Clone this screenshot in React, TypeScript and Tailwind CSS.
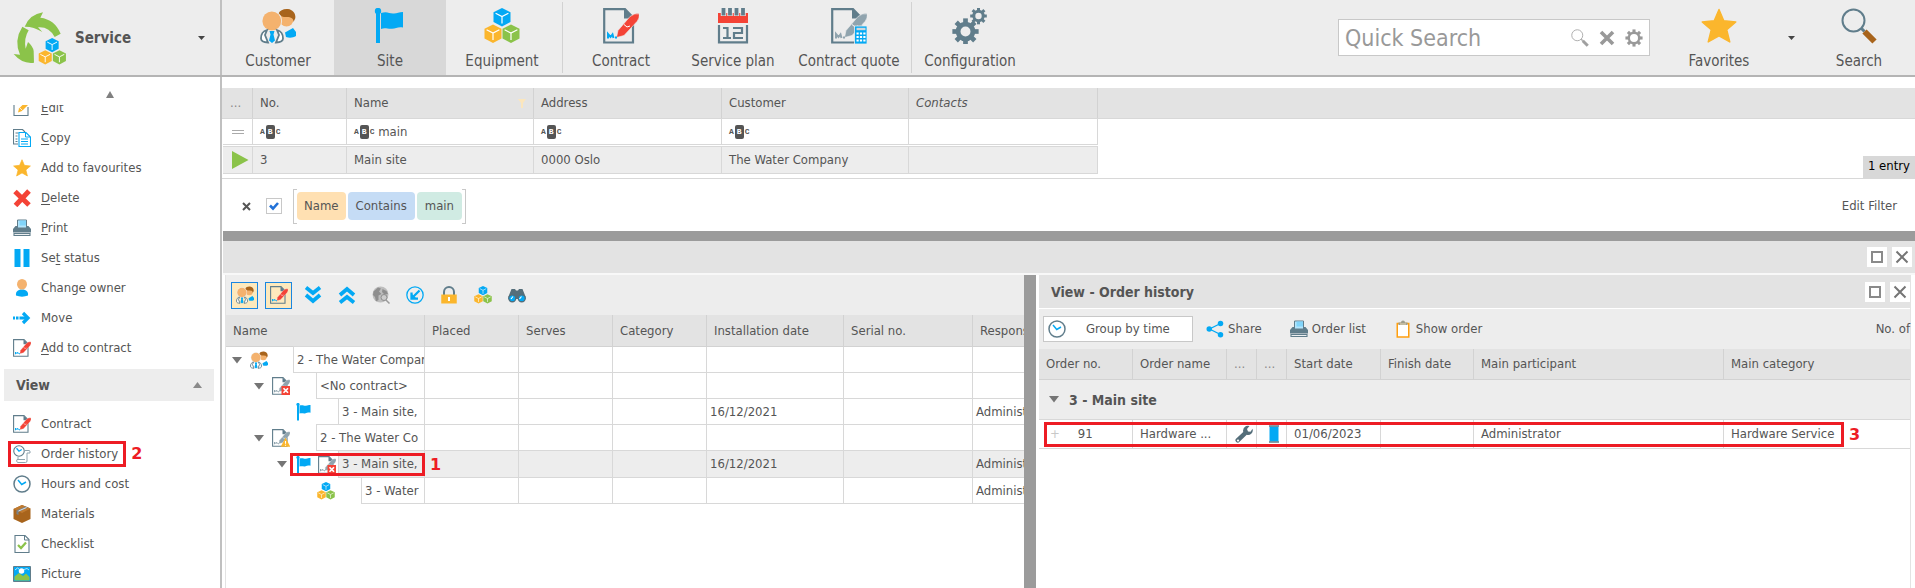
import type { ReactNode } from "react";

type IconProps = { size?: number };

const BLUE = "#03a9f4";
const SLATE = "#607d8b";
const GREEN = "#8bc34a";
const AMBER = "#fbb62d";
const RED = "#f44336";
const BROWN = "#a8641c";
const SKIN = "#f4b26e";

function Svg({ size = 18, box = 36, children }: { size?: number; box?: number; children: ReactNode }) {
  return (
    <svg width={size} height={size} viewBox={`0 0 ${box} ${box}`} fill="none" aria-hidden="true" className="block shrink-0">
      {children}
    </svg>
  );
}

function Cube({ x, y, color }: { x: number; y: number; color: string }) {
  return (
    <g transform={`translate(${x} ${y})`}>
      <path d="M9 0 17.5 4.2V14L9 18.6.5 14V4.2Z" fill={color} />
      <path d="M2.6 5.3 9 8.6l6.4-3.3M9 8.6v7" fill="none" stroke="#fff" strokeWidth="1.2" />
    </g>
  );
}

function LogoIcon() {
  return (
    <svg width="54" height="54" viewBox="0 0 162 162" aria-hidden="true" className="block shrink-0">
      <path d="M35 47Q50 10 90 4L82 20Q125 25 143 68L125 78Q108 46 75 49L88 63Q60 46 35 47Z" fill={GREEN} />
      <path d="M28 47 47 58Q32 82 38 113L45 93Q60 106 62 120L63 155Q28 160 2 129L21 131Q2 88 28 47Z" fill={GREEN} />
      <g transform="translate(76 81) scale(2.3)">
        <Cube x={9} y={0} color={BLUE} />
        <Cube x={0} y={16} color={AMBER} />
        <Cube x={18.5} y={16} color={GREEN} />
      </g>
    </svg>
  );
}

const CubesIcon = ({ size }: IconProps) => (
  <Svg size={size}>
    <Cube x={9} y={0} color={BLUE} />
    <Cube x={0} y={16.5} color={AMBER} />
    <Cube x={18} y={16.5} color={GREEN} />
  </Svg>
);

const CustomerIcon = ({ size }: IconProps) => (
  <Svg size={size}>
    <circle cx="26.500" cy="11.500" r="7" fill={SKIN} />
    <path d="M18.500 5.500C20 2 24 .5 28 1c5 .6 8.200 5 7.200 9.500L33.500 14C33.500 9 29 9 26 9c-3 0-5-.5-7.500-3.500Z" fill={BROWN} />
    <path d="M25 24.500 33 20l3 4v4c-3 2-7 2-10 1Z" fill={BLUE} />
    <circle cx="11.800" cy="13" r="10.300" fill="#eee" />
    <circle cx="11.800" cy="13" r="9.400" fill={SKIN} />
    <path d="M7 22C3 23 1 26 1 30.500c0 3 3 3.800 7 4L5 27ZM17 22c4 1 6 4 6 8.500 0 3-3 3.800-7 4L19 27Z" fill="#fff" stroke={SLATE} strokeWidth="1.800" />
    <path d="M9.500 23h5l-1 3.500 1.500 6-3 2.500-3-2.500 1.500-6Z" fill={BLUE} />
  </Svg>
);

const FlagIcon = ({ size }: IconProps) => (
  <Svg size={size}>
    <circle cx="6" cy="3" r="3.200" fill={BLUE} />
    <path d="M4 3h4v32H4ZM9 5c7-2 8 1 13 .5 3-.3 5-1.500 9-1.500v15.500c-5-1-7 1-11 1.300C15 21 13 19.500 9 21Z" fill={BLUE} />
  </Svg>
);

const Page = () => (
  <>
    <path d="M1.200 1.200H22L30 9.500V34.500H1.200Z" stroke={SLATE} strokeWidth="2.200" />
    <path d="M21 1v9.500h9.500Z" fill={SLATE} />
  </>
);

const Pen = ({ color }: { color: string }) => (
  <>
    <path d="M13.500 29.500 15 22.500 27 8.500Q32 4.500 36.500 6 36.500 10.500 34 13.500L21 27.500Z" fill={color} stroke="#eee" strokeWidth=".6" />
    <path d="m21 16.500 3 2.500 3-1" stroke="#fff" strokeWidth="1" />
  </>
);

const SIGNATURE = "M5 30.500V26L7.500 29 9.500 26.500 10.500 30M12 29.500h2";

const ContractIcon = ({ size }: IconProps) => (
  <Svg size={size}>
    <Page />
    <Pen color={RED} />
    <path d={SIGNATURE} stroke={BLUE} strokeWidth="2" />
  </Svg>
);

const GreyContract = () => (
  <>
    <Page />
    <Pen color="#90a4ae" />
    <path d={SIGNATURE} stroke="#90a4ae" strokeWidth="2" />
  </>
);

const QuoteIcon = ({ size }: IconProps) => (
  <Svg size={size}>
    <GreyContract />
    <rect x="23.500" y="18" width="12.500" height="18" fill={BLUE} stroke="#eee" strokeWidth=".8" />
    <path d="M25.500 21h9" stroke="#cfd8dc" strokeWidth="2.400" />
    <path d="M25.500 25.500h9M25.500 29h9M25.500 32.500h9" stroke="#fff" strokeWidth="2" strokeDasharray="2.200 1.200" />
  </Svg>
);

const ContractErrorIcon = ({ size }: IconProps) => (
  <Svg size={size}>
    <GreyContract />
    <rect x="19" y="18" width="17" height="18" fill={RED} />
    <path d="m23 22.500 9 9m0-9-9 9" stroke="#fff" strokeWidth="3.400" />
  </Svg>
);

const ContractWarnIcon = ({ size }: IconProps) => (
  <Svg size={size}>
    <GreyContract />
    <path d="m27 17 9.500 18.500h-19Z" fill={AMBER} />
    <path d="M27 24v5.500m0 2v2" stroke="#fff" strokeWidth="2.200" />
  </Svg>
);

const CalendarIcon = ({ size }: IconProps) => (
  <Svg size={size}>
    <path d="M3 5h30v10H3Z" fill={RED} />
    <path d="M8.500 0v8M15 0v8M21.500 0v8M28 0v8" stroke="#eee" strokeWidth="5.400" />
    <path d="M8.500 0v7.500M15 0v7.500M21.500 0v7.500M28 0v7.500" stroke={SLATE} strokeWidth="3.800" />
    <path d="M4 17v17.300h28V17" stroke={SLATE} strokeWidth="2.200" />
    <path d="M8 20h4.500v9.500M8 30h8M18 20h9v5h-8v5h9" stroke={SLATE} strokeWidth="2.200" />
  </Svg>
);

const gearTeeth = [0, 45, 90, 135, 180, 225, 270, 315];

function Gear({ x, y, r, color, hole }: { x: number; y: number; r: number; color: string; hole: number }) {
  return (
    <g transform={`translate(${x} ${y})`}>
      {gearTeeth.map((a) => (
        <rect key={a} x={-r * 0.24} y={-r * 1.34} width={r * 0.48} height={r * 0.6} fill={color} transform={`rotate(${a})`} />
      ))}
      <circle r={(r + hole) / 2} stroke={color} strokeWidth={r - hole} />
    </g>
  );
}

const GearsIcon = ({ size }: IconProps) => (
  <Svg size={size}>
    <Gear x={13.500} y={23.500} r={9.800} hole={5} color={SLATE} />
    <Gear x={26.500} y={8} r={6.200} hole={3.200} color={SLATE} />
  </Svg>
);

const StarIcon = ({ size }: IconProps) => (
  <Svg size={size}>
    <path d="m18 1.500 4.800 11.200 12 1.300-9 7.800 3 12.200L18 27.800 7.200 34l3-12.200-9-7.800 12-1.300Z" fill={AMBER} stroke={AMBER} strokeWidth="1.400" strokeLinejoin="round" />
  </Svg>
);

const MagnifierIcon = ({ size, ring = SLATE, handle = BROWN }: IconProps & { ring?: string; handle?: string }) => (
  <Svg size={size}>
    <circle cx="12.500" cy="12.500" r="11" stroke={ring} strokeWidth="2" />
    <path d="m20 20 3.500 3.500" stroke={ring} strokeWidth="3" />
    <path d="m23.500 23.500 10 10" stroke={handle} strokeWidth="6" />
  </Svg>
);

const EditIcon = () => (
  <Svg>
    <path d="M20 3H2v30h28V16" stroke={SLATE} strokeWidth="2.200" />
    <path d="m10 27 2-8L26 5l6 5-14 14Z" fill={AMBER} />
    <path d="m14 18 5 5" stroke="#fff" strokeWidth="1.500" />
  </Svg>
);

const CopyIcon = () => (
  <Svg>
    <path d="M10 30H1V1h18l5 5" stroke={SLATE} strokeWidth="2.200" />
    <path d="M5 8h6M5 14h4M5 20h4M5 25h4" stroke={SLATE} strokeWidth="2" />
    <path d="M12 7h14l9 9v19H12Z" fill="#fff" stroke={BLUE} strokeWidth="2.200" />
    <path d="M25 7v9h9M16 20h14M16 25h14M16 30h14" stroke={BLUE} strokeWidth="2" />
  </Svg>
);

const DeleteIcon = () => (
  <Svg>
    <path d="m4 5 28 27M32 4 5 33" stroke={RED} strokeWidth="10" />
  </Svg>
);

const PrinterIcon = () => (
  <Svg>
    <path d="M9 2h18v16H9Z" fill="#b3e5fc" stroke={SLATE} strokeWidth="2" />
    <path d="M13 3h13v10H13Z" fill="#81d4fa" />
    <path d="M5 14h4v4h18v-4h4l5 6v7H0v-7Z" fill={SLATE} />
    <path d="M2 29h32v4H2Z" fill="#eceff1" stroke={SLATE} strokeWidth="2.200" />
  </Svg>
);

const PauseIcon = () => (
  <Svg>
    <path d="M3 0h12v36H3ZM21 0h12v36H21Z" fill={BLUE} />
  </Svg>
);

const UserIcon = () => (
  <Svg>
    <path d="M6 33c-1-7 3-12 12-12s13 5 12 12c-7 3-17 3-24 0Z" fill={BLUE} />
    <ellipse cx="18" cy="10.500" rx="10" ry="10.500" fill={SKIN} />
  </Svg>
);

const MoveIcon = () => (
  <Svg>
    <path d="M0 15h4v6H0ZM6 15h5v6H6ZM13 15h14v6H13Z" fill={BLUE} />
    <path d="m20 8 10 10-10 10" stroke={BLUE} strokeWidth="6.500" />
  </Svg>
);

const ClockIcon = () => (
  <Svg>
    <circle cx="18" cy="18" r="16" fill="#fff" stroke={SLATE} strokeWidth="3" />
    <path d="m10 10 7.500 9L26 14" stroke={BLUE} strokeWidth="3" />
  </Svg>
);

const OrderHistoryIcon = () => (
  <Svg>
    <circle cx="12" cy="12" r="10.500" fill="#fff" stroke={SLATE} strokeWidth="2.200" />
    <path d="m7 6.500 5 6 5.500-3.500" stroke={BLUE} strokeWidth="2.600" />
    <path d="M24 11h8q3 0 2 5h-6v16q0 3-3 3H9q-3-3-1-6h16M10 24v5" stroke="#90a4ae" strokeWidth="2" />
  </Svg>
);

const BoxIcon = () => (
  <Svg>
    <path d="m18 0 17 7v21l-17 8L1 28V8Z" fill={BROWN} />
    <path d="m1 8 17 8 17-9L18 0Z" fill="#bf7a30" />
    <path d="m7 11 18-8 5 2-19 9v6l-4-2Z" fill="#78828a" />
    <path d="m11 12 16-7" stroke="#fff" strokeWidth="1.500" />
  </Svg>
);

const ChecklistIcon = () => (
  <Svg>
    <path d="M4 1h20l8 8v26H4Z" fill="#fff" stroke={SLATE} strokeWidth="2.200" />
    <path d="M23 1v9h9" stroke={SLATE} strokeWidth="2" />
    <path d="m10 20 6 6 10-11" stroke={GREEN} strokeWidth="4.500" />
  </Svg>
);

const PictureIcon = () => (
  <Svg>
    <path d="M1 3h34v30H1Z" fill={BLUE} stroke={SLATE} strokeWidth="2" />
    <path d="M3 23 12 16l8 6 6-5 7 7v7H3Z" fill={GREEN} />
    <circle cx="17" cy="12" r="5.500" fill="#fff" />
    <path d="m4 10 5-4 4 3M22 9l6-2 4 3" stroke="#b3e5fc" strokeWidth="2" />
  </Svg>
);

const ChevronsIcon = ({ up = false }: { up?: boolean }) => (
  <Svg>
    <g transform={up ? "rotate(180 18 18)" : undefined}>
      <path d="m4 3 14 11L32 3M4 18l14 12 14-12" stroke={BLUE} strokeWidth="7.500" />
    </g>
  </Svg>
);

const GlobeIcon = () => (
  <Svg>
    <circle cx="17" cy="17" r="16" fill="#bdbdbd" />
    <path d="M3 11 12 3l6 2-4 6 5 5-6 3v9L8 31l-2-9-4-4ZM21 6l8 4 3 6-7 1-5-5Z" fill="#8e8e8e" />
    <circle cx="24" cy="23" r="6" fill="#ccc" stroke="#8e8e8e" strokeWidth="2" />
    <path d="m28 28 7 7" stroke="#9a9a9a" strokeWidth="3" />
  </Svg>
);

const OpenIcon = () => (
  <Svg>
    <circle cx="18" cy="18" r="16.300" stroke={BLUE} strokeWidth="2.600" />
    <path d="M27 9 13 23M11 13v12h13" stroke={BLUE} strokeWidth="4.500" />
    <path d="M11 15v10h10Z" fill={BLUE} />
  </Svg>
);

const LockIcon = () => (
  <Svg>
    <path d="M8 19V12a10 10 0 0 1 20 0v7" stroke={SLATE} strokeWidth="4" />
    <path d="M2.500 17h31v18h-31Z" fill={AMBER} />
    <path d="M18 22v8" stroke="#fff" strokeWidth="4" />
  </Svg>
);

const BinocularsIcon = () => (
  <Svg>
    <path d="M7 6h7l2 3h4l2-3h7l6 15v5H1v-5Z" fill="#546e7a" />
    <circle cx="8.500" cy="24.500" r="7" fill={BLUE} stroke="#546e7a" strokeWidth="2.600" />
    <circle cx="27.500" cy="24.500" r="7" fill={BLUE} stroke="#546e7a" strokeWidth="2.600" />
    <path d="m6 26 4-5m13 5 4-5" stroke="#fff" strokeWidth="2.200" />
  </Svg>
);

const ShareIcon = () => (
  <Svg>
    <path d="M29 7 7 18l22 11" stroke={BLUE} strokeWidth="2.600" />
    <circle cx="6.500" cy="18" r="5.500" fill={BLUE} />
    <circle cx="29" cy="7" r="5.500" fill={BLUE} />
    <circle cx="29" cy="29.500" r="5.500" fill={BLUE} />
  </Svg>
);

const ClipboardIcon = () => (
  <Svg>
    <path d="M6.500 7h23v27h-23Z" fill="#fff" stroke="#ff9f0f" strokeWidth="3" />
    <path d="M9 10V5h5q0-4 4-4t4 4h5v5Z" fill="#9e9e8e" />
    <path d="M12 8h12" stroke="#e8d9b5" strokeWidth="2" />
  </Svg>
);

const WrenchIcon = () => (
  <Svg>
    <path d="M22 2q4-1.500 7 0l-5 6 2 5 5 .5 4-6q2 6-2.500 10-4 3.500-9 2L9 33.500Q6 37 2.500 34t-.5-6.500L16.500 14Q14.500 6 22 2ZM6 29a2 2 0 1 0 .1 0Z" fill="#546e7a" fillRule="evenodd" />
  </Svg>
);

const StatusIcon = () => (
  <Svg>
    <path d="M9 3h18v30H9Z" fill={BLUE} />
    <path d="M8 2h20M8 34h20" stroke={SLATE} strokeWidth="3" />
  </Svg>
);

const TriangleDown = () => (
  <svg width="10" height="7" viewBox="0 0 10 7" aria-hidden="true" className="block">
    <path d="M0 0h10L5 6.500Z" fill="#757575" />
  </svg>
);

const AbcIcon = () => (
  <span aria-hidden="true" className="inline-flex items-center gap-px align-middle font-['Liberation_Mono',monospace] text-[8px] leading-[14px] font-bold text-[#555]">
    A<span className="rounded-xs bg-[#555] px-0.5 text-white">B</span>C
  </span>
);

function NavButton({ icon, label, active = false, wide = false }: { icon: ReactNode; label: string; active?: boolean; wide?: boolean }) {
  return (
    <button type="button" className={`flex flex-col items-center gap-[7px] pt-2 text-[15px] leading-5 whitespace-nowrap ${wide ? "w-[120px]" : "w-[112px]"} ${active ? "bg-[#d8d8d8]" : ""}`}>
      {icon}
      {label}
    </button>
  );
}

type Item = { icon: ReactNode; label: ReactNode; callout?: boolean };

const actions: Item[] = [
  { icon: <EditIcon />, label: <><u>E</u>dit</> },
  { icon: <CopyIcon />, label: <><u>C</u>opy</> },
  { icon: <StarIcon size={18} />, label: "Add to favourites" },
  { icon: <DeleteIcon />, label: <><u>D</u>elete</> },
  { icon: <PrinterIcon />, label: <><u>P</u>rint</> },
  { icon: <PauseIcon />, label: <>Se<u>t</u> status</> },
  { icon: <UserIcon />, label: "Change owner" },
  { icon: <MoveIcon />, label: "Move" },
  { icon: <ContractIcon size={18} />, label: <><u>A</u>dd to contract</> },
];

const views: Item[] = [
  { icon: <ContractIcon size={18} />, label: "Contract" },
  { icon: <OrderHistoryIcon />, label: "Order history", callout: true },
  { icon: <ClockIcon />, label: "Hours and cost" },
  { icon: <BoxIcon />, label: "Materials" },
  { icon: <ChecklistIcon />, label: "Checklist" },
  { icon: <PictureIcon />, label: "Picture" },
];

function MenuList({ items }: { items: Item[] }) {
  return (
    <ul>
      {items.map((item, i) => (
        <li key={i} className="flex h-[30px]">
          <button type="button" className="relative ml-[13px] flex items-center gap-2.5 text-left whitespace-nowrap">
            {item.icon}
            <span className="underline-offset-2">{item.label}</span>
            {item.callout && <Callout n={2} className="-right-2 -left-[5px]" />}
          </button>
        </li>
      ))}
    </ul>
  );
}

function Callout({ n, className }: { n: number; className: string }) {
  return (
    <span className={`pointer-events-none absolute inset-y-0.5 z-10 border-3 border-[#ed1c24] ${className}`}>
      <span className="absolute inset-y-0 left-full ml-2 flex items-center font-['DejaVu_Sans',sans-serif] text-base font-bold text-[#ed1c24]">{n}</span>
    </span>
  );
}

function WindowButtons() {
  return (
    <div className="flex gap-[5px]">
      <button type="button" aria-label="Maximize" className="flex size-5 items-center justify-center bg-white">
        <span className="size-3 border-2 border-[#8a8a8a]" />
      </button>
      <button type="button" aria-label="Close" className="flex size-5 items-center justify-center bg-white">
        <svg width="14" height="14" viewBox="0 0 14 14" aria-hidden="true">
          <path d="m1.500 1.500 11 11m0-11-11 11" stroke="#757575" strokeWidth="2" />
        </svg>
      </button>
    </div>
  );
}

function SiteTable() {
  const th = "border-r border-[#d2d2d2] px-[7px] text-left font-normal";
  const td = "border-r border-[#d8d8d8] px-[7px]";
  return (
    <table className="w-[875px] table-fixed border-separate border-spacing-0">
      <colgroup>
        <col className="w-[30px]" />
        <col className="w-[94px]" />
        <col className="w-[187px]" />
        <col className="w-[188px]" />
        <col className="w-[187px]" />
        <col className="w-[189px]" />
      </colgroup>
      <thead>
        <tr className="h-[30px]">
          <th className={`${th} text-[#8a8a8a]`}>...</th>
          <th className={th}>No.</th>
          <th className={th}>
            <span className="flex items-center justify-between">
              Name
              <svg width="8" height="9" viewBox="0 0 8 9" aria-hidden="true">
                <path d="M0 0h8L5 4v5H3V4Z" fill="#fbe6bd" />
              </svg>
            </span>
          </th>
          <th className={th}>Address</th>
          <th className={th}>Customer</th>
          <th className={`${th} italic`}>Contacts</th>
        </tr>
      </thead>
      <tbody>
        <tr className="h-[27px] bg-white">
          <td className="border-y border-r border-[#d8d8d8] px-[9px]">
            <span className="block h-1 w-3 border-y border-[#aaa]" />
          </td>
          <td className={`${td} border-y`}><AbcIcon /></td>
          <td className={`${td} border-y`}>
            <AbcIcon /> main
          </td>
          <td className={`${td} border-y`}><AbcIcon /></td>
          <td className={`${td} border-y`}><AbcIcon /></td>
          <td className={`${td} border-y`} />
        </tr>
        <tr className="h-px bg-white"><td colSpan={6} /></tr>
        <tr className="h-[28px] bg-[#ededed]">
          <td className="border-y border-r border-[#d8d8d8] px-2">
            <svg width="18" height="18" viewBox="0 0 18 18" aria-hidden="true" className="block max-w-none">
              <path d="M1 0v18L17.500 9Z" fill={GREEN} />
            </svg>
          </td>
          <td className={`${td} border-y`}>3</td>
          <td className={`${td} border-y`}>Main site</td>
          <td className={`${td} border-y`}>0000 Oslo</td>
          <td className={`${td} border-y`}>The Water Company</td>
          <td className={`${td} border-y`} />
        </tr>
      </tbody>
    </table>
  );
}

type TreeRow = {
  text: string;
  indent: string;
  label: string;
  toggle: boolean;
  icons: ReactNode;
  date?: string;
  person?: string;
  selected?: boolean;
};

const tree: TreeRow[] = [
  { text: "2 - The Water Company", indent: "w-[67px]", label: "pl-[5px]", toggle: true, icons: <CustomerIcon size={18} /> },
  { text: "<No contract>", indent: "w-[90px]", label: "pl-[27px]", toggle: true, icons: <ContractErrorIcon size={18} /> },
  { text: "3 - Main site,", indent: "w-[112px]", label: "pl-[50px]", toggle: false, icons: <FlagIcon size={18} />, date: "16/12/2021", person: "Administrator" },
  { text: "2 - The Water Co", indent: "w-[90px]", label: "pl-[27px]", toggle: true, icons: <ContractWarnIcon size={18} /> },
  { text: "3 - Main site,", indent: "w-[112px]", label: "pl-[50px]", toggle: true, icons: <><FlagIcon size={18} /><ContractErrorIcon size={18} /></>, date: "16/12/2021", person: "Administrator", selected: true },
  { text: "3 - Water", indent: "w-[135px]", label: "pl-[72px]", toggle: false, icons: <CubesIcon size={18} />, person: "Administrator" },
];

function TreeTable() {
  const th = "border-r border-b border-[#d2d2d2] px-[7px] text-left font-normal";
  const td = "border-r border-b border-[#d8d8d8] px-[3px]";
  return (
    <table className="w-full min-w-[850px] table-fixed border-separate border-spacing-0">
      <colgroup>
        <col className="w-[199px]" />
        <col className="w-[94px]" />
        <col className="w-[94px]" />
        <col className="w-[94px]" />
        <col className="w-[137px]" />
        <col className="w-[129px]" />
        <col />
      </colgroup>
      <thead>
        <tr className="h-8 bg-[#e3e3e3]">
          {["Name", "Placed", "Serves", "Category", "Installation date", "Serial no.", "Responsible"].map((h) => (
            <th key={h} className={th}>{h}</th>
          ))}
        </tr>
      </thead>
      <tbody>
        {tree.map((row, i) => (
          <tr key={i} className={row.selected ? "h-[27px] bg-[#ededed]" : "h-[26px]"}>
            <td className="relative border-r border-[#d8d8d8] p-0">
              <div className="flex h-full items-stretch">
                <span className={`flex shrink-0 items-center gap-[5px] bg-white ${row.indent} ${row.label}`}>
                  <span className="mr-0.5 flex w-3 shrink-0 justify-center">
                    {row.toggle && <TriangleDown />}
                  </span>
                  {row.icons}
                </span>
                <span className={`-mt-px min-w-0 flex-1 overflow-hidden border-y border-l border-[#d8d8d8] pl-[3px] whitespace-nowrap ${row.selected ? "h-7 leading-[26px]" : "h-[27px] leading-[25px]"}`}>
                  {row.text}
                </span>
              </div>
              {row.selected && <Callout n={1} className="-inset-y-px -right-px left-16" />}
            </td>
            <td className={td} />
            <td className={td} />
            <td className={td} />
            <td className={td}>{row.date}</td>
            <td className={td} />
            <td className={td}>{row.person}</td>
          </tr>
        ))}
      </tbody>
    </table>
  );
}

function OrderTable() {
  const th = "border-r border-b border-[#d2d2d2] px-[7px] text-left font-normal whitespace-nowrap";
  const td = "border-r border-b border-[#d8d8d8] px-[7px] whitespace-nowrap";
  return (
    <table className="w-full table-fixed border-separate border-spacing-0">
      <colgroup>
        <col className="w-[94px]" />
        <col className="w-[94px]" />
        <col className="w-[30px]" />
        <col className="w-[30px]" />
        <col className="w-[94px]" />
        <col className="w-[93px]" />
        <col className="w-[250px]" />
        <col />
      </colgroup>
      <thead>
        <tr className="h-[31px] bg-[#e3e3e3]">
          <th className={th}>Order no.</th>
          <th className={th}>Order name</th>
          <th className={`${th} text-[#8a8a8a]`}>...</th>
          <th className={`${th} text-[#8a8a8a]`}>...</th>
          <th className={th}>Start date</th>
          <th className={th}>Finish date</th>
          <th className={th}>Main participant</th>
          <th className="border-b border-[#d2d2d2] px-[7px] text-left font-normal">Main category</th>
        </tr>
      </thead>
      <tbody>
        <tr className="h-10 bg-[#ededed]">
          <th colSpan={8} className="border-b border-[#d8d8d8] px-2.5 text-left text-sm font-bold">
            <span className="flex items-center gap-2.5">
              <TriangleDown />
              3 - Main site
            </span>
          </th>
        </tr>
        <tr className="relative h-[29px]">
          <td className={td}>
            <span className="flex items-center gap-[18px]">
              <span className="ml-1 text-[#c8c8c8]">+</span>91
            </span>
            <Callout n={3} className="-inset-y-px right-[66px] left-[5px]" />
          </td>
          <td className={td}>Hardware ...</td>
          <td className="border-r border-b border-[#d8d8d8] pl-2"><WrenchIcon /></td>
          <td className="border-r border-b border-[#d8d8d8] pl-2"><StatusIcon /></td>
          <td className={td}>01/06/2023</td>
          <td className={td} />
          <td className={td}>Administrator</td>
          <td className="border-b border-[#d8d8d8] px-[7px]">Hardware Service</td>
        </tr>
      </tbody>
    </table>
  );
}

const treeTools: { label: string; icon: ReactNode; on?: boolean }[] = [
  { label: "Show customers", icon: <CustomerIcon size={18} />, on: true },
  { label: "Show contracts", icon: <ContractIcon size={18} />, on: true },
  { label: "Expand all", icon: <ChevronsIcon /> },
  { label: "Collapse all", icon: <ChevronsIcon up /> },
  { label: "Map", icon: <GlobeIcon /> },
  { label: "Open", icon: <OpenIcon /> },
  { label: "Lock", icon: <LockIcon /> },
  { label: "Equipment", icon: <CubesIcon size={18} /> },
  { label: "Find", icon: <BinocularsIcon /> },
];

export default function App() {
  return (
    <div className="flex h-screen flex-col overflow-hidden bg-white font-['DejaVu_Sans_Condensed','DejaVu_Sans',sans-serif] text-[13px] leading-5 text-[#555]">
      <header className="flex h-[77px] shrink-0 border-b-2 border-[#b4b4b4] bg-[#ededed]">
        <div className="flex w-[222px] shrink-0 items-center border-r-2 border-[#c0c0c0] pl-[13px]">
          <LogoIcon />
          <button type="button" className="flex flex-1 items-center justify-between pr-[15px] pl-2 text-[15px] font-bold">
            Service
            <svg width="7" height="4" viewBox="0 0 7 4" aria-hidden="true"><path d="M0 0h7L3.500 4Z" fill="#444" /></svg>
          </button>
        </div>
        <nav className="flex">
          <NavButton icon={<CustomerIcon size={36} />} label="Customer" />
          <NavButton icon={<FlagIcon size={36} />} label="Site" active />
          <NavButton icon={<CubesIcon size={36} />} label="Equipment" />
          <span className="my-0.5 mr-0.5 ml-1 w-px bg-[#d2d2d2]" />
          <NavButton icon={<ContractIcon size={36} />} label="Contract" />
          <NavButton icon={<CalendarIcon size={36} />} label="Service plan" />
          <NavButton icon={<QuoteIcon size={36} />} label="Contract quote" wide />
          <span className="mx-0.5 my-0.5 w-px bg-[#d2d2d2]" />
          <NavButton icon={<GearsIcon size={36} />} label="Configuration" />
        </nav>
        <div className="ml-auto flex items-center">
          <div className="mr-[13px] flex h-[37px] w-[312px] items-center gap-2.5 border border-[#c8c8c8] bg-white px-1.5">
            <input type="text" aria-label="Quick Search" placeholder="Quick Search" className="min-w-0 flex-1 text-[23px] outline-none placeholder:text-[#999]" />
            <button type="button" aria-label="Run search"><MagnifierIcon size={18} ring="#b0b0b0" handle="#a0a0a0" /></button>
            <button type="button" aria-label="Clear search">
              <svg width="16" height="16" viewBox="0 0 16 16" aria-hidden="true"><path d="m2 2 12 12m0-12L2 14" stroke="#999" strokeWidth="3.600" /></svg>
            </button>
            <button type="button" aria-label="Search settings">
              <Svg size={18}><Gear x={18} y={18} r={12.800} hole={8} color="#999" /></Svg>
            </button>
          </div>
          <div className="flex self-stretch">
            <NavButton icon={<StarIcon size={36} />} label="Favorites" />
            <button type="button" aria-label="More favorites" className="mr-1 ml-2 flex w-4 items-center justify-center">
              <svg width="7" height="4" viewBox="0 0 7 4" aria-hidden="true"><path d="M0 0h7L3.500 4Z" fill="#444" /></svg>
            </button>
            <NavButton icon={<MagnifierIcon size={36} />} label="Search" />
          </div>
        </div>
      </header>

      <div className="flex min-h-0 flex-1">
        <aside className="flex w-[222px] shrink-0 flex-col border-r-2 border-[#c0c0c0]">
          <button type="button" aria-label="Scroll up" className="flex h-7 shrink-0 items-center justify-center pt-1.5">
            <svg width="8" height="7" viewBox="0 0 8 7" aria-hidden="true"><path d="M4 0l4 7H0Z" fill="#808080" /></svg>
          </button>
          <div className="min-h-0 flex-1 overflow-hidden">
            <div className="-mt-3 flex flex-col">
              <MenuList items={actions} />
              <button type="button" className="mr-1.5 mb-2 ml-1 mt-1.5 flex h-8 items-center justify-between bg-[#ededed] px-3 text-sm font-bold">
                View
                <svg width="9" height="6" viewBox="0 0 9 6" aria-hidden="true"><path d="M4.500 0 9 6H0Z" fill="#8a8a8a" /></svg>
              </button>
              <MenuList items={views} />
            </div>
          </div>
        </aside>

        <main className="flex min-w-0 flex-1 flex-col">
          <section className="mt-[11px] flex items-end justify-between border-b border-[#d8d8d8] bg-[linear-gradient(#e3e3e3_30px,#d8d8d8_30px,#d8d8d8_31px,#fff_31px)] pl-px">
            <div className="pb-1"><SiteTable /></div>
            <span className="bg-[#d8d8d8] px-[5px] pb-0.5 text-black">1 entry</span>
          </section>
          <section className="flex h-[52px] shrink-0 items-center pt-0.5 pl-5">
            <button type="button" aria-label="Remove filter">
              <svg width="9" height="9" viewBox="0 0 9 9" aria-hidden="true"><path d="m1 1 7 7m0-7L1 8" stroke="#555" strokeWidth="2" /></svg>
            </button>
            <label className="relative ml-[15px] flex size-4">
              <input type="checkbox" defaultChecked aria-label="Filter enabled" className="peer size-4 appearance-none border border-[#c8c8c8] bg-white" />
              <svg width="16" height="16" viewBox="0 0 16 16" fill="none" aria-hidden="true" className="pointer-events-none absolute inset-0 hidden peer-checked:block">
                <path d="m4 7.500 3 3L12 5" stroke="#2272d8" strokeWidth="2.600" />
              </svg>
            </label>
            <div className="ml-[11px] flex h-[35px] items-center">
              <span className="h-full w-1 border-y border-l border-[#c8c8c8]" />
              <div className="flex gap-0.5">
                <button type="button" className="h-7 rounded-sm bg-[#ffe0b2] px-[7px]">Name</button>
                <button type="button" className="h-7 rounded-sm bg-[#c5dcf5] px-2">Contains</button>
                <button type="button" className="h-7 rounded-sm bg-[#d0ebe3] px-2">main</button>
              </div>
              <span className="h-full w-1 border-y border-r border-[#c8c8c8]" />
            </div>
            <button type="button" className="mr-[18px] ml-auto">Edit Filter</button>
          </section>
          <div className="ml-px h-2.5 shrink-0 bg-[#9b9b9b]" />
          <div className="ml-px flex h-[34px] shrink-0 items-center justify-end border-b-2 border-[#f8f8f8] bg-[#e3e3e3] pr-[3px]">
            <WindowButtons />
          </div>

          <div className="flex min-h-0 flex-1">
            <section className="ml-[3px] flex w-[799px] shrink-0 flex-col overflow-hidden border-l border-[#e3e3e3]">
              <div className="flex h-10 shrink-0 items-center gap-[7px] bg-[#ededed] px-[5px]">
                {treeTools.map((t) => (
                  <button key={t.label} type="button" aria-label={t.label} className={`flex h-[27px] w-[27px] items-center justify-center ${t.on ? "border border-[#1a86e0] bg-[#fde9bd]" : ""}`}>
                    {t.icon}
                  </button>
                ))}
              </div>
              <TreeTable />
            </section>
            <div className="w-3 shrink-0 bg-[#9b9b9b]" />
            <section className="mr-1 flex min-w-0 flex-1 flex-col border-r border-[#e3e3e3] pl-[3px]">
              <div className="flex h-[33px] shrink-0 items-center justify-between bg-[#e3e3e3] pl-3">
                <h2 className="text-sm font-bold">View - Order history</h2>
                <WindowButtons />
              </div>
              <div className="flex h-[41px] shrink-0 items-center border-t border-white bg-[#ededed] pl-1 whitespace-nowrap">
                <button type="button" className="flex h-[26px] w-[150px] items-center border border-[#c8c8c8] bg-white pl-1">
                  <ClockIcon />
                  <span className="ml-5">Group by time</span>
                </button>
                <button type="button" className="ml-[13px] flex items-center gap-1"><ShareIcon />Share</button>
                <button type="button" className="ml-7 flex items-center gap-1"><PrinterIcon />Order list</button>
                <button type="button" className="ml-7 flex items-center gap-1"><ClipboardIcon />Show order</button>
                <span className="ml-auto">No. of</span>
              </div>
              <OrderTable />
            </section>
          </div>
        </main>
      </div>
    </div>
  );
}
